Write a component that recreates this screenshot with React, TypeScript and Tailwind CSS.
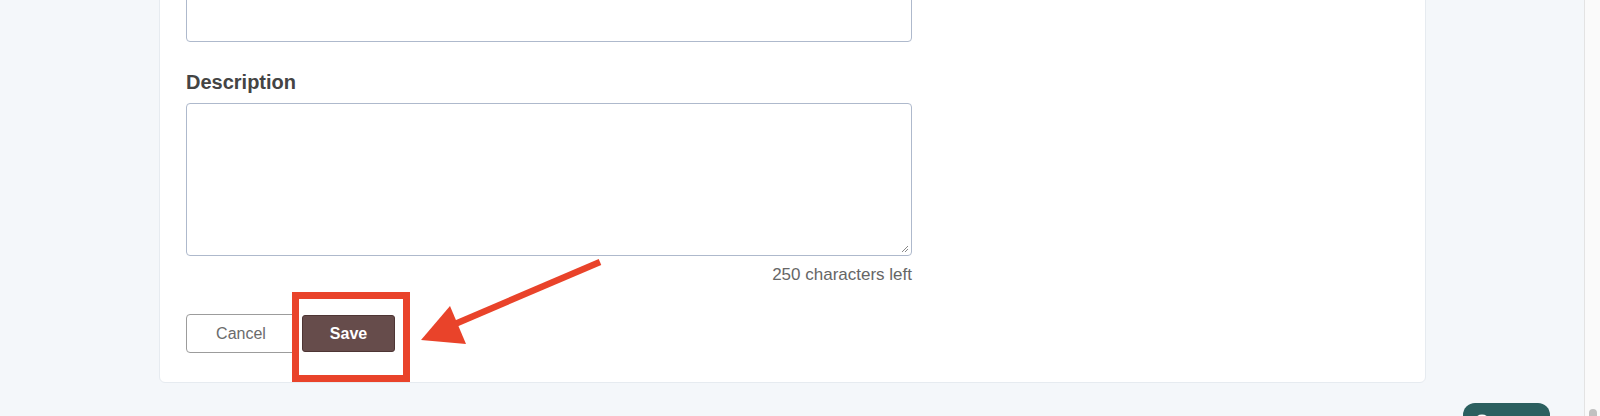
import React from 'react';

const App: React.FC = () => {
  return (
    <div
      className="relative flex h-[416px] w-full overflow-hidden bg-[#f4f7fa]"
      style={{ fontFamily: '"Liberation Sans", Arial, sans-serif' }}
    >
      {/* page content */}
      <div className="flex-1 pl-[159px] pr-[158px]">
        <div className="-mt-[60px] rounded-md border border-[#e6ebf0] bg-white px-[26px] pt-[20px] pb-[29px]">
          {/* name input (cut off at the top) */}
          <div className="h-[81px] w-[726px] rounded-[4px] border border-[#aeb9cc] bg-white"></div>

          {/* description */}
          <label className="mt-[28px] block text-[20px] font-bold leading-[24px] text-[#444]">Description</label>
          <div className="relative mt-[9px] h-[153px] w-[726px] rounded-[4px] border border-[#aeb9cc] bg-white">
            {/* resize grip */}
            <svg className="absolute right-[2px] bottom-[2px]" width="8" height="8" viewBox="0 0 8 8">
              <path d="M7 1 L1 7 M7 4 L4 7" stroke="#888" strokeWidth="1" />
            </svg>
          </div>
          <p className="mt-[9px] w-[726px] text-right text-[17px] leading-[20px] text-[#666]">250 characters left</p>

          {/* actions */}
          <div className="mt-[29px] flex items-center gap-[6px]">
            <button className="h-[39px] w-[110px] rounded-[4px] border border-[#9c9c9c] bg-white text-[16px] text-[#6b6b6b]">
              Cancel
            </button>
            <button className="h-[37px] w-[93px] rounded-[3px] border border-[#4e3534] bg-[#664c4b] text-[16px] font-bold text-white">
              Save
            </button>
          </div>
        </div>
      </div>

      {/* browser scrollbar */}
      <div className="relative w-[16px] border-l border-[#e3e3e3] bg-[#fafafa]">
        <div className="absolute left-[4px] top-[409px] h-[20px] w-[8px] rounded-full bg-[#c1c1c1]"></div>
      </div>

      {/* help widget */}
      <div className="absolute left-[1463px] top-[403px] flex h-[40px] w-[87px] items-center gap-[8px] rounded-t-[12px] bg-[#2b5f5f] pl-[10px] text-white">
        <svg width="18" height="18" viewBox="0 0 24 24" fill="none" stroke="white" strokeWidth="2.5">
          <circle cx="12" cy="12" r="10" />
          <path d="M9.1 9a3 3 0 0 1 5.8 1c0 2-3 3-3 3" />
          <circle cx="12" cy="17" r="0.5" fill="white" />
        </svg>
        <span className="text-[16px] font-bold">Help</span>
      </div>

      {/* annotation: highlight box */}
      <div className="absolute left-[292px] top-[292px] h-[90px] w-[118px] border-[7px] border-[#e9432a]"></div>

      {/* annotation: arrow */}
      <svg className="pointer-events-none absolute left-0 top-0" width="1600" height="416">
        <line x1="600" y1="262" x2="455" y2="324" stroke="#e9432a" strokeWidth="6.5" strokeLinecap="butt" />
        <polygon points="421,340 450,306 466,344" fill="#e9432a" />
      </svg>
    </div>
  );
};

export default App;
